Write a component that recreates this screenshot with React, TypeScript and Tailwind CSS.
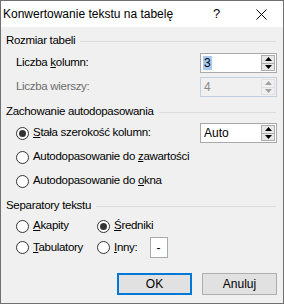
import React from "react";

const F = { fontFamily: '"Liberation Sans", Arial, sans-serif' };

function Tri({ up, color }: { up: boolean; color: string }) {
  return (
    <svg width="7" height="4" viewBox="0 0 7 4">
      {up ? <polygon points="0,4 7,4 3.5,0" fill={color} /> : <polygon points="0,0 7,0 3.5,4" fill={color} />}
    </svg>
  );
}

function SpinButtons({ disabled }: { disabled?: boolean }) {
  const b = disabled ? "border-[#e0e0e0] bg-[#f0f0f0]" : "border-[#adadad] bg-[#e8e8e8]";
  const c = disabled ? "#a0a0a0" : "#000";
  return (
    <div className="w-[15px] flex flex-col py-[1px] pr-[1px]">
      <div className={"flex-1 flex items-center justify-center border " + b}>
        <Tri up color={c} />
      </div>
      <div className={"flex-1 flex items-center justify-center border border-t-0 " + b}>
        <Tri up={false} color={c} />
      </div>
    </div>
  );
}

function Spin({ value, disabled, selected }: { value: string; disabled?: boolean; selected?: boolean }) {
  return (
    <div
      className={
        "w-[77px] h-[20px] flex border " +
        (disabled ? "border-[#c3d0df] bg-[#f0f0f0]" : "border-[#a9a9a9] bg-white")
      }
    >
      <div className="flex-1 flex items-center pl-[2px]">
        <span
          className={
            (selected ? "bg-[#a7caee] " : "") +
            (disabled ? "text-[#8a8a8a] " : "text-black ") +
            "text-[12px] leading-[14px] px-[1px]"
          }
        >
          {value}
        </span>
      </div>
      <SpinButtons disabled={disabled} />
    </div>
  );
}

function Radio({ checked }: { checked?: boolean }) {
  return (
    <div className="w-[13px] h-[13px] rounded-full border border-[#333333] bg-white flex items-center justify-center shrink-0">
      {checked && <div className="w-[7px] h-[7px] rounded-full bg-[#333333]" />}
    </div>
  );
}

function Header({ text, mt }: { text: string; mt: string }) {
  return (
    <div className={"h-[16px] flex items-center " + mt}>
      <span className="text-[11.5px] tracking-[-0.3px] text-black whitespace-nowrap">{text}</span>
      <div className="flex-1 h-px bg-[#dcdcdc] ml-[5px] mr-[1px]" />
    </div>
  );
}

const T = "text-[11.5px] tracking-[-0.3px] text-black whitespace-nowrap";

export default function App() {
  return (
    <div style={F} className="w-[284px] h-[304px] border border-[#707070] bg-[#f0f0f0] flex flex-col box-border">
      <div className="h-[26px] bg-white flex items-center pl-[2px] shrink-0">
        <span className="text-[12px] text-black whitespace-nowrap">Konwertowanie tekstu na tabelę</span>
        <span className="ml-auto text-[13px] text-black w-[10px] mr-[33px]">?</span>
        <svg width="11" height="11" viewBox="0 0 11 11" className="mr-[16px]">
          <path d="M0.5 0.5 L10.5 10.5 M10.5 0.5 L0.5 10.5" stroke="#000" strokeWidth="1" />
        </svg>
      </div>
      <div className="flex flex-col pl-[5px] pr-[6px]">
        <Header text="Rozmiar tabeli" mt="mt-[6px]" />
        <div className="h-[20px] mt-[4px] flex items-center pl-[10px]">
          <span className={T}>
            Liczba <u>k</u>olumn:
          </span>
          <div className="ml-auto">
            <Spin value="3" selected />
          </div>
        </div>
        <div className="h-[20px] mt-[4px] flex items-center pl-[10px]">
          <span className="text-[11.5px] tracking-[-0.3px] text-[#6d6d6d] whitespace-nowrap">Liczba wierszy:</span>
          <div className="ml-auto">
            <Spin value="4" disabled />
          </div>
        </div>
        <Header text="Zachowanie autodopasowania" mt="mt-[7px]" />
        <div className="h-[20px] mt-[3px] flex items-center pl-[10px]">
          <Radio checked />
          <span className={T + " ml-[4px]"}>
            <u>S</u>tała szerokość kolumn:
          </span>
          <div className="ml-auto">
            <div className="w-[77px] h-[20px] flex border border-[#a9a9a9] bg-white">
              <div className="flex-1 flex items-center pl-[3px] text-[12px] text-black">Auto</div>
              <SpinButtons />
            </div>
          </div>
        </div>
        <div className="h-[20px] mt-[4px] flex items-center pl-[10px]">
          <Radio />
          <span className={T + " ml-[4px]"}>
            Autodopasowanie do <u>z</u>awartości
          </span>
        </div>
        <div className="h-[20px] mt-[4px] flex items-center pl-[10px]">
          <Radio />
          <span className={T + " ml-[4px]"}>
            Autodopasowanie do <u>o</u>kna
          </span>
        </div>
        <Header text="Separatory tekstu" mt="mt-[7px]" />
        <div className="h-[20px] mt-[2px] flex items-center pl-[10px]">
          <div className="w-[81px] flex items-center">
            <Radio />
            <span className={T + " ml-[4px]"}>
              <u>A</u>kapity
            </span>
          </div>
          <div className="flex items-center">
            <Radio checked />
            <span className={T + " ml-[4px]"}>
              <u>Ś</u>redniki
            </span>
          </div>
        </div>
        <div className="h-[21px] mt-[1px] flex items-center pl-[10px]">
          <div className="w-[81px] flex items-center">
            <Radio />
            <span className={T + " ml-[4px]"}>
              <u>T</u>abulatory
            </span>
          </div>
          <div className="flex items-center">
            <Radio />
            <span className={T + " ml-[4px]"}>
              <u>I</u>nny:
            </span>
            <div className="ml-[13px] w-[18px] h-[21px] bg-white border border-[#a9a9a9] flex items-center pl-[5px] text-[12px] text-black">
              -
            </div>
          </div>
        </div>
        <div className="mt-[15px] flex justify-end gap-[10px]">
          <button className="w-[75px] h-[22px] border-2 border-[#0078d7] bg-[#e1e1e1] text-[12px] text-black">OK</button>
          <button className="w-[75px] h-[22px] border border-[#adadad] bg-[#e1e1e1] text-[12px] text-black">Anuluj</button>
        </div>
      </div>
    </div>
  );
}
